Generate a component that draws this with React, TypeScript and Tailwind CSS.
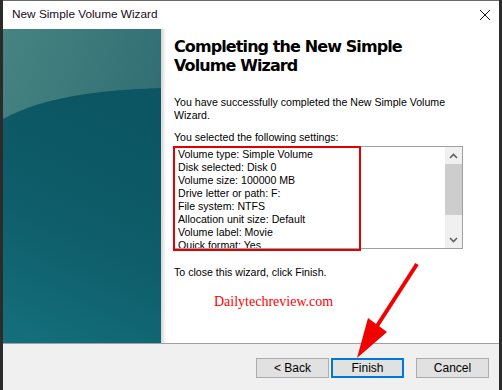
import React from 'react';

const settings = [
    'Volume type: Simple Volume',
    'Disk selected: Disk 0',
    'Volume size: 100000 MB',
    'Drive letter or path: F:',
    'File system: NTFS',
    'Allocation unit size: Default',
    'Volume label: Movie',
    'Quick format: Yes',
];

function SidePanel() {
    return (
        <div className="w-[158px] h-full shrink-0">
            <svg width="158" height="314" viewBox="0 0 158 314" className="block">
                <defs>
                    <linearGradient id="top" x1="0" y1="0" x2="1" y2="0.6">
                        <stop offset="0" stopColor="#468482" />
                        <stop offset="1" stopColor="#2d6a71" />
                    </linearGradient>
                    <linearGradient id="low" x1="0.3" y1="0" x2="0" y2="1">
                        <stop offset="0" stopColor="#0b5662" />
                        <stop offset="0.5" stopColor="#0f5e6b" />
                        <stop offset="1" stopColor="#14707d" />
                    </linearGradient>
                </defs>
                <rect width="158" height="314" fill="url(#top)" />
                <path d="M0 90 C 30 74, 70 62, 158 59 L158 314 L0 314 Z" fill="url(#low)" />
            </svg>
        </div>
    );
}

function Chevron({ up }: { up?: boolean }) {
    return (
        <svg width="9" height="6" viewBox="0 0 9 6">
            <path
                d={up ? 'M1 5 L4.5 1.5 L8 5' : 'M1 1 L4.5 4.5 L8 1'}
                stroke="#606060"
                strokeWidth="1.6"
                fill="none"
            />
        </svg>
    );
}

function Button({ label, primary }: { label: string; primary?: boolean }) {
    return (
        <button
            className={
                primary
                    ? 'w-[73px] h-[20px] bg-[#e1e1e1] border-2 border-[#0078d7] text-[12px] text-black flex items-center justify-center'
                    : 'w-[73px] h-[20px] bg-[#e1e1e1] border border-[#adadad] text-[12px] text-black flex items-center justify-center'
            }
        >
            {label}
        </button>
    );
}

export default function App() {
    return (
        <div
            className="relative w-[502px] h-[390px] bg-[#2b2b2b] pl-[3px] pr-[3px] overflow-hidden"
            style={{ fontFamily: '"Liberation Sans", Arial, sans-serif' }}
        >
            <div className="w-[496px] h-full bg-white flex flex-col border-t border-[#6a6a6a]">
                {/* title bar */}
                <div className="h-[28px] shrink-0 flex items-center justify-between pl-[9px] pr-[9px]">
                    <span className="text-[11.8px] text-[#1a0a20]">New Simple Volume Wizard</span>
                    <svg width="10" height="10" viewBox="0 0 10 10">
                        <path d="M0 0 L10 10 M10 0 L0 10" stroke="#111" strokeWidth="1" />
                    </svg>
                </div>

                {/* body */}
                <div className="h-[314px] shrink-0 flex">
                    <SidePanel />
                    <div className="w-[5px] shrink-0 bg-gradient-to-r from-[#d4d4d4] to-white" />
                    <div className="flex-1 pl-[8px] pt-[8px] text-[10.6px] text-black">
                        <h1
                            className="text-[16px] font-bold leading-[19px] tracking-[-0.9px] text-black"
                            style={{ fontFamily: '"DejaVu Sans", Verdana, sans-serif' }}
                        >
                            Completing the New Simple
                            <br />
                            Volume Wizard
                        </h1>
                        <p className="mt-[21px] leading-[12.5px]">
                            You have successfully completed the New Simple Volume
                            <br />
                            Wizard.
                        </p>
                        <p className="mt-[10px] leading-[13px]">You selected the following settings:</p>
                        <div className="relative mt-[2px] w-[289px] h-[103px] border border-[#a0a0a0] flex">
                            <div className="flex-1 pl-[3px] pt-[1px] overflow-hidden leading-[13px]">
                                {settings.map((s) => (
                                    <div key={s} className="whitespace-nowrap">
                                        {s}
                                    </div>
                                ))}
                            </div>
                            <div className="w-[17px] bg-[#f0f0f0] flex flex-col items-center">
                                <div className="h-[17px] flex items-center justify-center">
                                    <Chevron up />
                                </div>
                                <div className="w-full h-[51px] bg-[#cdcdcd]" />
                                <div className="flex-1" />
                                <div className="h-[17px] flex items-center justify-center">
                                    <Chevron />
                                </div>
                            </div>
                            <div className="absolute left-[-2px] top-[-1px] w-[188px] h-[105px] border-2 border-[#e30000]" />
                        </div>
                        <p className="mt-[17px] leading-[13px]">To close this wizard, click Finish.</p>
                        <p
                            className="mt-[12px] ml-[40px] text-[14px] text-[#ff0000]"
                            style={{ fontFamily: '"Liberation Serif", "Times New Roman", serif' }}
                        >
                            Dailytechreview.com
                        </p>
                    </div>
                </div>

                <div className="h-px shrink-0 bg-[#a0a0a0]" />

                {/* footer */}
                <div className="flex-1 bg-[#f0f0f0] flex justify-end items-start pt-[14px] pr-[10px]">
                    <Button label="< Back" />
                    <div className="w-[2px]" />
                    <Button label="Finish" primary />
                    <div className="w-[12px]" />
                    <Button label="Cancel" />
                </div>
            </div>

            {/* annotation arrow */}
            <svg className="absolute left-0 top-0 pointer-events-none" width="502" height="390">
                <line x1="417" y1="264" x2="377" y2="326" stroke="#f00000" strokeWidth="4" />
                <polygon points="357,358 368,318 387,332" fill="#f00000" />
            </svg>
        </div>
    );
}
